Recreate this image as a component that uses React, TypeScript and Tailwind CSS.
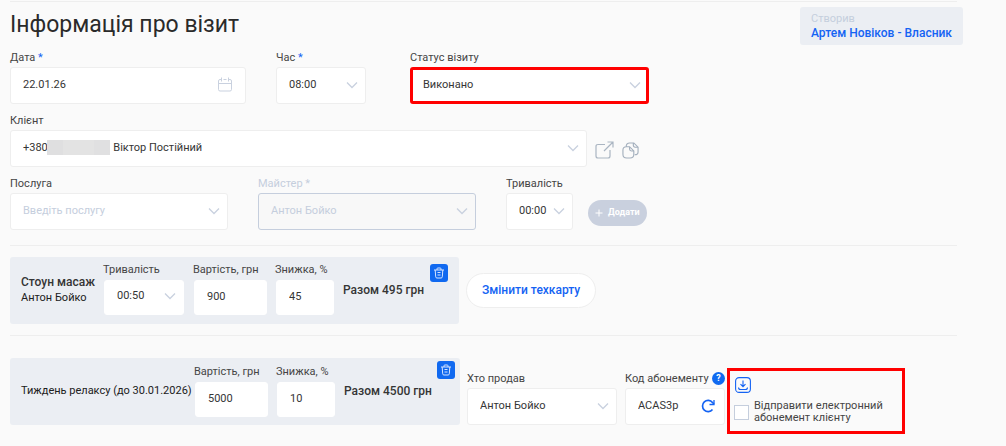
import { useState, type ReactNode } from "react";

const CONTROL =
  "block w-full appearance-none rounded-[3px] border text-[11px] text-[#353535] outline-none";

function Chevron({ compact }: { compact?: boolean }) {
  return (
    <svg
      viewBox="0 0 12 8"
      fill="none"
      stroke="#c9d1df"
      strokeWidth="1.3"
      className={`pointer-events-none absolute right-2 h-2 w-3 ${compact ? "top-3" : "top-3.5"}`}
    >
      <path d="M1 1.5 6 6.5 11 1.5" />
    </svg>
  );
}

function Field({
  id,
  label,
  required,
  muted,
  className,
  labelClass = "mb-[3px]",
  children,
}: {
  id: string;
  label: string;
  required?: boolean;
  muted?: boolean;
  className: string;
  labelClass?: string;
  children: ReactNode;
}) {
  return (
    <div className={className}>
      <label
        htmlFor={id}
        className={`block text-[11px] leading-3 whitespace-nowrap ${muted ? "text-[#c5cedd]" : "text-[#454545]"} ${labelClass}`}
      >
        {label}
        {required && <span className={muted ? "" : "text-[#1463f3]"}> *</span>}
      </label>
      <div className="relative">{children}</div>
    </div>
  );
}

function Select({
  id,
  options,
  tone = "border-[#eeeeee] bg-white pl-3",
  compact,
  disabled,
}: {
  id: string;
  options: string[];
  tone?: string;
  compact?: boolean;
  disabled?: boolean;
}) {
  return (
    <>
      <select
        id={id}
        disabled={disabled}
        className={`${CONTROL} ${compact ? "h-[35px] pb-[3px]" : "h-[37px] pb-px"} ${tone}`}
      >
        {options.map((o) => (
          <option key={o}>{o}</option>
        ))}
      </select>
      <Chevron compact={compact} />
    </>
  );
}

function CardInput({ id, value }: { id: string; value: string }) {
  return (
    <input
      id={id}
      defaultValue={value}
      className={`${CONTROL} h-[35px] border-white bg-white pb-[3px] pl-3`}
    />
  );
}

function DeleteButton() {
  return (
    <button
      type="button"
      aria-label="Видалити"
      className="flex size-[18px] items-center justify-center rounded-[3px] bg-[#1069f0]"
    >
      <svg viewBox="0 0 12 12" fill="none" stroke="#d6e5ff" strokeWidth="1" className="size-3">
        <path d="M1 3h10M4 3V1.8Q4 1 4.8 1h2.4Q8 1 8 1.8V3M2.2 3l.5 6.8q.1 1.2 1.2 1.2h4.2q1.1 0 1.2-1.2L9.8 3M4.5 5.5h3M4.500 8h3" />
      </svg>
    </button>
  );
}

export default function App() {
  const [send, setSend] = useState(false);
  const labelGap = "mb-1 -ml-px";

  return (
    <main className="min-h-screen bg-[#fafafa] pt-px pr-[49px] pb-5 pl-2.5 font-['Roboto','Liberation_Sans',sans-serif] text-[#353535]">
      <header className="flex items-start justify-between border-t border-[#eeeeee] pt-[5px]">
        <h1 className="pt-[3px] text-[23px] leading-[30px] font-normal text-[#2a2a2a]">Інформація про візит</h1>
        <div className="-mr-1.5 rounded-[3px] bg-[#ebeef3] py-1 pr-[11px] pl-[11px] leading-[15px]">
          <p className="text-[11px] text-[#c5cedd]">Створив</p>
          <a href="#owner" className="block text-xs leading-[15px] font-medium text-[#1463f3]">
            Артем Новіков - Власник
          </a>
        </div>
      </header>

      <section className="flex flex-col gap-[11px] border-b border-[#eeeeee] pt-[7px] pb-[15px]">
        <div className="flex flex-wrap items-end">
          <Field id="date" label="Дата" required className="mr-[30px] w-[236px]">
            <input
              id="date"
              defaultValue="22.01.26"
              className={`${CONTROL} h-[37px] border-[#eeeeee] bg-white pb-[3px] pl-3`}
            />
            <svg
              viewBox="0 0 14 15"
              fill="none"
              stroke="#c9d1df"
              className="pointer-events-none absolute top-2.5 right-3.5 h-[15px] w-3.5"
            >
              <path d="M3 2.5H2Q.5 2.5.5 4v8.500q0 1.500 1.500 1.500h10q1.500 0 1.500-1.500V4q0-1.500-1.500-1.500h-1M.5 6.500h13M3.500.5v4M10.500.5v4M5.500 2.500h3" />
            </svg>
          </Field>
          <Field id="time" label="Час" required className="mr-11 w-[90px]">
            <Select id="time" options={["08:00", "09:00"]} />
          </Field>
          <Field id="status" label="Статус візиту" className="w-[239px]">
            <Select id="status" options={["Виконано", "Очікує"]} tone="border-3 border-[#ff0000] bg-white pl-2.5" />
          </Field>
        </div>

        <div className="flex items-end">
          <Field id="client" label="Клієнт" className="w-[577px]">
            <Select id="client" options={["+380" + "\u00a0".repeat(24) + "Віктор Постійний"]} />
            <span className="pointer-events-none absolute top-2.5 left-[37px] flex h-[15px] w-[63px]">
              <span className="flex-1 bg-[#dfdfe0]" />
              <span className="flex-2 bg-[#e3e3e3]" />
              <span className="flex-1 bg-[#e0e0e1]" />
            </span>
          </Field>
          <button type="button" aria-label="Відкрити клієнта" className="mb-2 ml-2">
            <svg viewBox="0 0 19 18" fill="none" stroke="#aab5c2" strokeWidth="1.2" className="h-[18px] w-[19px]">
              <path d="M10 3.500H3Q1 3.500 1 5.500v9.500q0 2 2 2h10q2 0 2-2V9M9 10l9-9M12.500 1H18v5.500" />
            </svg>
          </button>
          <button type="button" aria-label="Копіювати клієнта" className="mb-2 ml-2">
            <svg viewBox="0 0 18 18" fill="none" stroke="#a3afbd" strokeWidth="1.2" className="size-[17px]">
              <path d="M4.500 5V4Q5 1 8 1h4.500l4.500 4.500v5q0 3-3.500 3M12 1v2.500q0 2 2 2h3M8 5H4.500Q1 5 1 8.500V13q0 4 4 4h3.500q4 0 4-4V9.500zM8 5v2.500q0 2 2 2h2.500" />
            </svg>
          </button>
        </div>

        <div className="flex flex-wrap items-end">
          <Field id="service" label="Послуга" className="mr-[30px] w-[218px]">
            <Select id="service" options={["Введіть послугу"]} tone="border-[#eeeeee] bg-white pl-3 text-[#c5cedd]!" />
          </Field>
          <Field id="master" label="Майстер" required muted className="mr-[30px] w-[218px]">
            <Select
              id="master"
              disabled
              options={["Антон Бойко"]}
              tone="border-[#c5cedd] bg-[#f8f8f8] pl-3 text-[#c5cedd]! opacity-100"
            />
          </Field>
          <Field id="duration" label="Тривалість" className="w-[67px]">
            <Select id="duration" options={["00:00", "00:30"]} />
          </Field>
          <button
            type="button"
            className="mb-1 ml-[15px] flex h-[26px] items-center gap-[5px] rounded-full bg-[#c9d0de] px-[7px] text-[9px] font-bold text-white"
          >
            <svg viewBox="0 0 8 8" stroke="white" className="size-2">
              <path d="M4 .5v7M.5 4h7" />
            </svg>
            Додати
          </button>
        </div>
      </section>

      <section className="flex flex-wrap items-center border-b border-[#eeeeee] pt-[11px] pb-[11px]">
        <div className="flex h-[67px] w-[449px] items-start rounded-[3px] bg-[#ebeef3] pt-[7px] pl-[11px]">
          <div className="w-[83px] pt-2.5 whitespace-nowrap">
            <h2 className="text-xs leading-4 font-medium">Стоун масаж</h2>
            <p className="text-[11px] leading-4 text-[#202020]">Антон Бойко</p>
          </div>
          <Field id="d1" label="Тривалість" className="mr-2.5 w-20" labelClass={labelGap}>
            <Select id="d1" options={["00:50", "01:00"]} tone="border-white bg-white pl-3" compact />
          </Field>
          <Field id="p1" label="Вартість, грн" className="mr-[9px] w-[73px]" labelClass={labelGap}>
            <CardInput id="p1" value="900" />
          </Field>
          <Field id="s1" label="Знижка, %" className="w-[58px]" labelClass={labelGap}>
            <CardInput id="s1" value="45" />
          </Field>
          <p className="mt-[18px] ml-[9px] w-[87px] text-xs leading-4 font-medium whitespace-nowrap">Разом 495 грн</p>
          <DeleteButton />
        </div>
        <button
          type="button"
          className="ml-[7px] h-[35px] rounded-full border border-[#eeeeee] bg-white px-[15px] pb-px text-xs font-medium text-[#1463f3]"
        >
          Змінити техкарту
        </button>
      </section>

      <section className="flex flex-wrap items-start pt-[22px]">
        <div className="mr-[7px] flex h-[67px] w-[450px] items-start rounded-[3px] bg-[#ebeef3] pt-2 pl-[11px]">
          <h2 className="w-[174px] pt-[17px] text-[11px] leading-4 font-normal whitespace-nowrap text-[#202020]">
            Тиждень релаксу (до 30.01.2026)
          </h2>
          <Field id="p2" label="Вартість, грн" className="mr-[9px] w-[73px]" labelClass={labelGap}>
            <CardInput id="p2" value="5000" />
          </Field>
          <Field id="s2" label="Знижка, %" className="w-[58px]" labelClass={labelGap}>
            <CardInput id="s2" value="10" />
          </Field>
          <p className="mt-[17px] ml-[9px] w-[93px] text-xs leading-4 font-medium whitespace-nowrap">Разом 4500 грн</p>
          <div className="-mt-[5px]">
            <DeleteButton />
          </div>
        </div>
        <Field id="seller" label="Хто продав" className="mt-[15px] mr-2 w-[150px]">
          <Select id="seller" options={["Антон Бойко"]} />
        </Field>
        <div className="relative mt-[15px] w-[100px]">
          <Field id="code" label="Код абонементу" className="w-full">
            <input
              id="code"
              defaultValue="ACAS3p"
              className={`${CONTROL} h-[37px] border-[#eeeeee] bg-white pb-[3px] pl-3`}
            />
            <button type="button" aria-label="Оновити код" className="absolute top-[11px] right-2.5">
              <svg viewBox="0 0 14 14" fill="none" stroke="#1463f3" strokeWidth="1.7" className="size-3.5">
                <path d="M11.500 10.500A5.600 5.600 0 1 1 11.500 3.500L13 5" />
                <path d="M13 1v4.500H8.500" strokeWidth="1.3" />
              </svg>
            </button>
          </Field>
          <button
            type="button"
            aria-label="Довідка"
            className="absolute -top-px right-0 size-[13px] rounded-full bg-[#1069f0] text-[9px] leading-[13px] font-bold text-white"
          >
            ?
          </button>
        </div>
        <div className="mt-2.5 ml-0.5 w-[178px] border-3 border-[#ff0000] pt-1.5 pb-[7px] pl-1">
          <button type="button" aria-label="Завантажити абонемент" className="ml-px block">
            <svg viewBox="0 0 16 16" fill="none" stroke="#1463f3" strokeWidth="1.1" className="size-4">
              <rect x=".6" y=".6" width="14.800" height="14.800" rx="3.500" />
              <path d="M8 3.500v6M5.500 7.200 8 9.700l2.500-2.500M3.500 10.500q0 2 2 2h5q2 0 2-2" />
            </svg>
          </button>
          <label className="mt-[7px] flex items-center gap-[5px] text-[11px] leading-3 text-[#454545]">
            <input
              type="checkbox"
              checked={send}
              onChange={(e) => setSend(e.target.checked)}
              className="size-[15px] shrink-0 appearance-none border border-[#c5cedd] bg-white checked:bg-[#1069f0]"
            />
            <span>
              Відправити електронний
              <br />
              абонемент клієнту
            </span>
          </label>
        </div>
      </section>
    </main>
  );
}
